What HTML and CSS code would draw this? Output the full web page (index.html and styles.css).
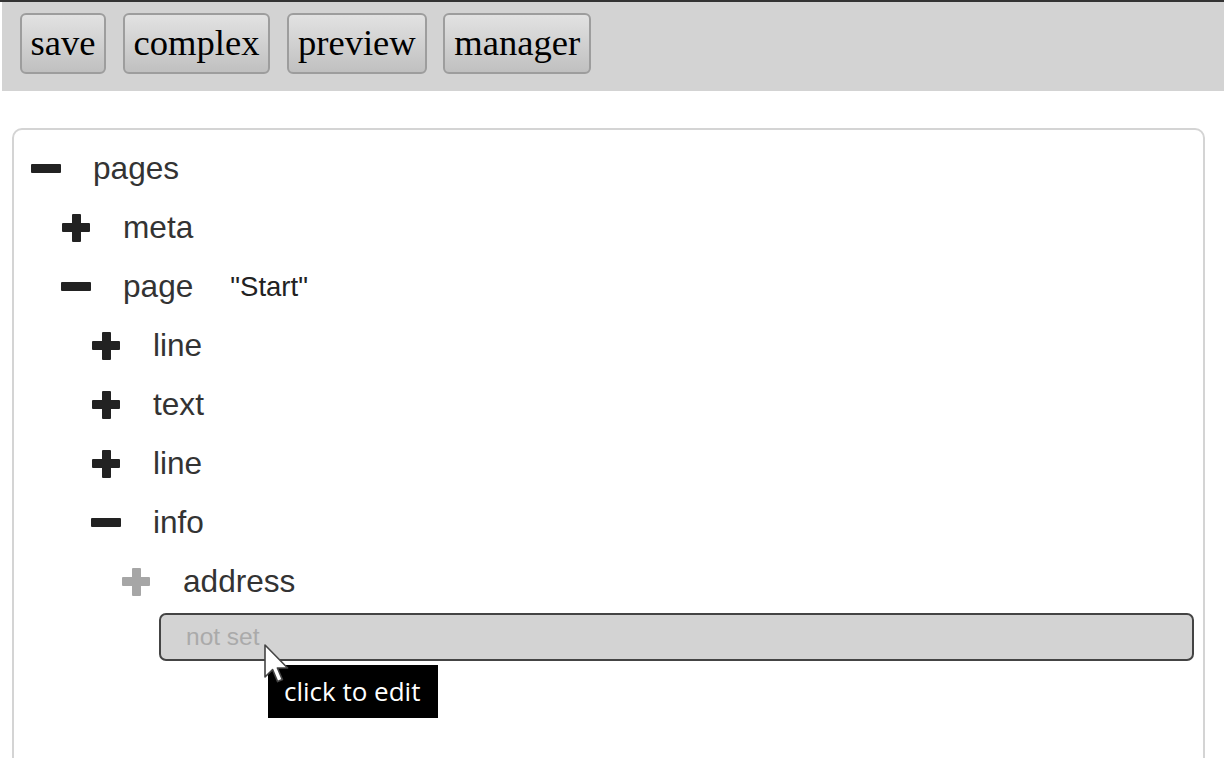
FILE: index.html
```html
<!DOCTYPE html>
<html>
<head>
<meta charset="utf-8">
<link rel="stylesheet" href="styles.css">
</head>
<body>
<div class="top">
  <div class="toolbar">
    <button class="btn">save</button>
    <button class="btn">complex</button>
    <button class="btn">preview</button>
    <button class="btn">manager</button>
  </div>
</div>
<div class="panel">
  <div class="row lvl0"><span class="ic minus"></span><span class="label">pages</span></div>
  <div class="row lvl1"><span class="ic plus"></span><span class="label">meta</span></div>
  <div class="row lvl1"><span class="ic minus"></span><span class="label">page</span><span class="attr">"Start"</span></div>
  <div class="row lvl2"><span class="ic plus"></span><span class="label">line</span></div>
  <div class="row lvl2"><span class="ic plus"></span><span class="label">text</span></div>
  <div class="row lvl2"><span class="ic plus"></span><span class="label">line</span></div>
  <div class="row lvl2"><span class="ic minus"></span><span class="label">info</span></div>
  <div class="row lvl3"><span class="ic plus gray"></span><span class="label">address</span></div>
  <div class="field-wrap">
    <div class="field">not set</div>
    <div class="tooltip">click to edit</div>
    <svg class="cursor" width="26" height="40" viewBox="0 0 13 20">
      <path d="M0.5 0.5 L0.5 16.5 L4.3 12.8 L6.8 18.8 L9.2 17.8 L6.7 12 L11.8 12 Z" fill="#fff" stroke="#444" stroke-width="0.8" stroke-linejoin="round"/>
    </svg>
  </div>
</div>
</body>
</html>
```

FILE: styles.css
```css
html, body {
  margin: 0;
  padding: 0;
  background: #fff;
  overflow: hidden;
}

body {
  width: 1224px;
  height: 758px;
  font-family: "Liberation Sans", Arial, sans-serif;
}

.top {
  border-top: 2px solid #333;
}

.toolbar {
  margin-left: 2px;
  height: 89px;
  box-sizing: border-box;
  padding: 11px 18px 0;
  background: #d3d3d3;
  display: flex;
  gap: 16.5px;
  align-items: flex-start;
}

.btn {
  font-family: "Liberation Serif", "Times New Roman", serif;
  font-size: 36.6px;
  color: #000;
  height: 61px;
  padding: 0 9px;
  border: 2px solid #9d9d9d;
  border-radius: 6px;
  background: linear-gradient(#e2e2e2, #c0c0c0);
  line-height: 1;
  margin: 0;
}

.btn:first-child {
  padding: 0 8.5px;
}

.panel {
  margin: 37px 0 0 12px;
  width: 1193px;
  height: 650px;
  box-sizing: border-box;
  border: 2px solid #d4d4d4;
  border-radius: 10px;
  padding-top: 9px;
  position: relative;
}

.row {
  display: flex;
  align-items: center;
  height: 59px;
  color: #333;
  font-size: 31.6px;
}

.lvl0 { padding-left: 17px; }
.lvl1 { padding-left: 47px; }
.lvl2 { padding-left: 77px; }
.lvl3 { padding-left: 107px; }

.ic {
  width: 30px;
  height: 30px;
  margin-right: 32px;
  position: relative;
  flex: none;
}

.ic::before,
.ic::after {
  content: "";
  position: absolute;
  background: #222;
  border-radius: 1px;
}

.minus::before {
  left: 0;
  top: 10px;
  width: 30px;
  height: 9px;
}

.minus::after {
  display: none;
}

.plus::before {
  left: 1px;
  top: 10px;
  width: 28px;
  height: 9px;
}

.plus::after {
  left: 10.5px;
  top: 1px;
  width: 9px;
  height: 28px;
}

.gray::before,
.gray::after {
  background: #a6a6a6;
}

.label {
  line-height: 1;
}

.attr {
  margin-left: 37px;
  font-size: 27.5px;
  color: #222;
}

.field-wrap {
  position: relative;
  margin: 2px 9px 0 145px;
}

.field {
  height: 48px;
  box-sizing: border-box;
  border: 2px solid #444;
  border-radius: 7px;
  background: #d3d3d3;
  color: #aaa;
  font-size: 24.5px;
  line-height: 44px;
  padding-left: 25px;
}

.tooltip {
  position: absolute;
  left: 109px;
  top: 52px;
  width: 170px;
  height: 53px;
  box-sizing: border-box;
  background: #000;
  color: #fff;
  font-family: "Open Sans", "Noto Sans", sans-serif;
  font-size: 26px;
  line-height: 53px;
  padding-left: 16px;
  white-space: nowrap;
}

.cursor {
  position: absolute;
  left: 105px;
  top: 31px;
}
```
